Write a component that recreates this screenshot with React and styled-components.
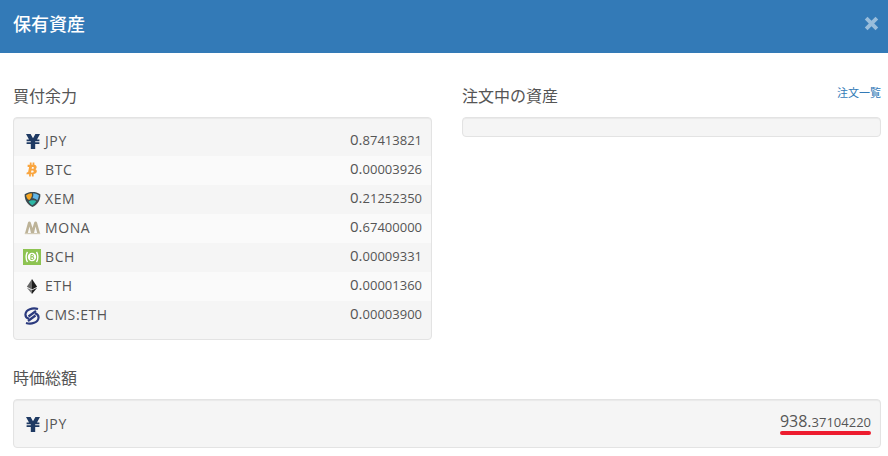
import React from 'react';
import styled, { createGlobalStyle } from 'styled-components';

const GlobalStyle = createGlobalStyle`
  html, body {
    margin: 0;
    background: #fff;
    overflow: hidden;
  }
  body {
    font-family: "Open Sans", "Noto Sans CJK JP", sans-serif;
    color: #555;
  }
`;

const Page = styled.div`
  width: 888px;
  height: 456px;
  overflow: hidden;
`;

const Header = styled.header`
  height: 53px;
  background: #337ab7;
  display: flex;
  align-items: center;
  justify-content: space-between;
  padding: 0 9px 7px 13px;
  box-sizing: border-box;

  h1 {
    margin: 0;
    font-size: 18px;
    font-weight: 500;
    color: #fff;
  }
`;

const CloseIcon = styled.svg`
  width: 15px;
  height: 15px;
  opacity: 0.5;
`;

const Body = styled.main`
  padding: 0 7px 0 13px;
`;

const Columns = styled.div`
  display: grid;
  grid-template-columns: 419px 419px;
  column-gap: 30px;
  padding-top: 31px;
`;

const SectionHead = styled.div`
  height: 33px;
  display: flex;
  justify-content: space-between;
  align-items: flex-start;

  h2 {
    margin: 0;
    font-size: 16px;
    line-height: 24px;
    font-weight: 400;
    color: #555;
  }

  a {
    font-size: 11px;
    line-height: 18px;
    color: #337ab7;
    text-decoration: none;
  }
`;

const Well = styled.div`
  background: #f5f5f5;
  border: 1px solid #e3e3e3;
  border-radius: 4px;
  box-shadow: inset 0 1px 1px rgba(0, 0, 0, 0.05);
  box-sizing: border-box;
  min-height: 20px;
  padding: ${props => props.$padding || '0'};
`;

const Row = styled.div`
  height: 29px;
  display: flex;
  align-items: center;
  justify-content: space-between;
  padding: 0 9px 2px 9px;
  box-sizing: border-box;

  &:nth-child(even) {
    background: #fafafa;
  }
`;

const Coin = styled.span`
  display: flex;
  align-items: center;
  gap: 4px;
  font-size: 14px;
  letter-spacing: 0.6px;
  color: #555;
`;

const IconBox = styled.span`
  width: 18px;
  height: 18px;
  display: flex;
  align-items: center;
  justify-content: center;
  transform: translate(${props => props.$dx || 0}px, ${props => props.$dy || 0}px);
`;

const Amount = styled.span`
  font-size: ${props => props.$size || 15}px;
  color: #555;
  margin-bottom: 4px;

  small {
    font-size: 13px;
  }
`;

const TotalSection = styled.section`
  padding-top: 26px;
`;

const TotalRow = styled.div`
  height: 47px;
  display: flex;
  align-items: center;
  justify-content: space-between;
  padding: 0 9px 1px 9px;
  box-sizing: border-box;
`;

const Underlined = styled.span`
  position: relative;
  margin-bottom: 4px;

  &::after {
    content: '';
    position: absolute;
    left: 0;
    right: 0;
    bottom: -3px;
    height: 4px;
    border-radius: 2px;
    background: #ed1c2e;
  }
`;

const Yen = () => (
  <svg width="14" height="15" viewBox="0 0 14 15">
    <path d="M0 0h4.600L7 4.200 9.400 0H14l-3 5.500h2.400v1.800H9.200v1h4.200v1.800H9.200V15H4.800v-4.900H.6V8.300h4.200v-1H.6V5.500H3z" fill="#1f3a63" />
  </svg>
);

const Btc = () => (
  <svg width="14" height="17" viewBox="0 0 16 18">
    <path
      d="M5.500 1h2v2.500h1.200V1h2v2.700c1.800.4 2.800 1.500 2.600 3-.1 1-.7 1.700-1.500 2 1.200.4 1.900 1.400 1.700 2.700-.3 1.900-1.800 2.600-3.600 2.700V17h-2v-2.500H6.700V17h-2v-2.500H1.500l.7-2.300h1.300L4.700 6H3V3.500h2.500zM8 6l-.4 2.200h1.500c1.500 0 1.500-2.200 0-2.200zM7.300 10l-.5 2.500h1.900c1.700 0 1.700-2.500 0-2.500z"
      fill="#f9a53f"
      fillRule="evenodd"
    />
  </svg>
);

const Xem = () => (
  <svg width="17" height="17" viewBox="0 0 18 18">
    <path d="M.7 3.500C3.500 1.500 6 1 9 1s5.500.5 8.300 2.500c.3 5.500-2.500 11-8.300 13.500C3.200 14.500.4 9 .7 3.500z" fill="#3c4a4f" />
    <path d="M2.200 4.500C4 3.300 5.800 2.700 8.200 2.500c.6 2.200-.2 5.500-2.500 7C4 9.500 2.600 7 2.200 4.500z" fill="#f6a623" />
    <path d="M9.600 2.500c2.200.1 4.400.8 6.200 2-.2 2-.8 3.800-1.800 5.500-1.200-1.600-3.600-2.200-5-2.200.8-1.500 1.100-3.500.6-5.300z" fill="#62b6e6" />
    <path d="M5 11c1.500-1.200 6.500-1.800 8-.2-1 1.800-2.400 3.300-4 4.400-1.800-1-3-2.500-4-4.200z" fill="#2cb8a6" />
  </svg>
);

const Mona = () => (
  <svg width="17" height="15" viewBox="0 0 17 15">
    <path d="M.8 14 4 2.500c.4-1.300 2.400-1.300 2.800 0L8.500 8l1.700-5.500c.4-1.300 2.400-1.300 2.800 0L16.200 14h-2.700l-2-7.500-1.700 7.500H7.200L5.500 6.500 3.500 14z" fill="#bdb398" />
    <path d="M.8 13h15.400v1.200H.8z" fill="#d3ccb8" />
  </svg>
);

const Bch = () => (
  <svg width="18" height="16" viewBox="0 0 18 16">
    <rect width="18" height="16" fill="#8dc351" />
    <path d="M4.500 3C2.700 5.500 2.700 10.500 4.500 13M13.500 3c1.800 2.500 1.800 7.500 0 10" fill="none" stroke="#fff" strokeWidth="1.400" />
    <circle cx="9" cy="8" r="4.200" fill="#fff" />
    <path d="M8 5.500h1.500c1.200 0 1.200 2.300 0 2.300H8.300h1.400c1.400 0 1.400 2.700 0 2.700H7.800z" fill="none" stroke="#8dc351" strokeWidth="1" />
  </svg>
);

const Eth = () => (
  <svg width="12" height="19" viewBox="0 0 14 18">
    <path d="M7 .3 1 9.200l6 3.300z" fill="#666" />
    <path d="M7 .3l6 8.900-6 3.300z" fill="#1d1d1d" />
    <path d="M1 10.500 7 17.700v-4.200z" fill="#777" />
    <path d="M13 10.500 7 17.700v-4.200z" fill="#1d1d1d" />
  </svg>
);

const Cms = () => (
  <svg width="16" height="18" viewBox="0 0 16 18">
    <g fill="none" stroke="#2b3a7e" strokeWidth="2.200">
      <path d="M14 2C8.500.3 2 2.500 1.500 7c-.3 2.500 1.500 4.200 3.500 4.800" />
      <path d="M2 16c5.500 1.700 12-.5 12.500-5 .3-2.500-1.500-4.200-3.500-4.800" />
      <path d="M4.500 9.500 12 4M4 14l7.500-5.500" />
    </g>
  </svg>
);

const coins = [
  { name: 'JPY', icon: <Yen />, dx: 1, dy: 1, int: '0.', frac: '87413821' },
  { name: 'BTC', icon: <Btc />, dx: 0, dy: 0, int: '0.', frac: '00003926' },
  { name: 'XEM', icon: <Xem />, dx: 0, dy: 1, int: '0.', frac: '21252350' },
  { name: 'MONA', icon: <Mona />, dx: 0, dy: 0, int: '0.', frac: '67400000' },
  { name: 'BCH', icon: <Bch />, dx: 0, dy: 0, int: '0.', frac: '00009331' },
  { name: 'ETH', icon: <Eth />, dx: 0, dy: 1, int: '0.', frac: '00001360' },
  { name: 'CMS:ETH', icon: <Cms />, dx: 0, dy: 1, int: '0.', frac: '00003900' },
];

export default function App() {
  return (
    <Page>
      <GlobalStyle />
      <Header>
        <h1>保有資産</h1>
        <CloseIcon viewBox="0 0 15 15">
          <path d="M3.500.8 7.500 4.800 11.500.8 14.200 3.500 10.200 7.500 14.200 11.500 11.500 14.200 7.500 10.200 3.500 14.200.8 11.500 4.800 7.500.8 3.500z" fill="#fff" />
        </CloseIcon>
      </Header>
      <Body>
        <Columns>
          <section>
            <SectionHead>
              <h2>買付余力</h2>
            </SectionHead>
            <Well $padding="9px 0">
              {coins.map(coin => (
                <Row key={coin.name}>
                  <Coin>
                    <IconBox $dx={coin.dx} $dy={coin.dy}>{coin.icon}</IconBox>
                    {coin.name}
                  </Coin>
                  <Amount>
                    {coin.int}
                    <small>{coin.frac}</small>
                  </Amount>
                </Row>
              ))}
            </Well>
          </section>
          <section>
            <SectionHead>
              <h2>注文中の資産</h2>
              <a href="#orders">注文一覧</a>
            </SectionHead>
            <Well />
          </section>
        </Columns>
        <TotalSection>
          <SectionHead>
            <h2>時価総額</h2>
          </SectionHead>
          <Well>
            <TotalRow>
              <Coin>
                <IconBox $dx={1} $dy={1}><Yen /></IconBox>
                JPY
              </Coin>
              <Underlined>
                <Amount $size={16}>
                  938.
                  <small>37104220</small>
                </Amount>
              </Underlined>
            </TotalRow>
          </Well>
        </TotalSection>
      </Body>
    </Page>
  );
}
